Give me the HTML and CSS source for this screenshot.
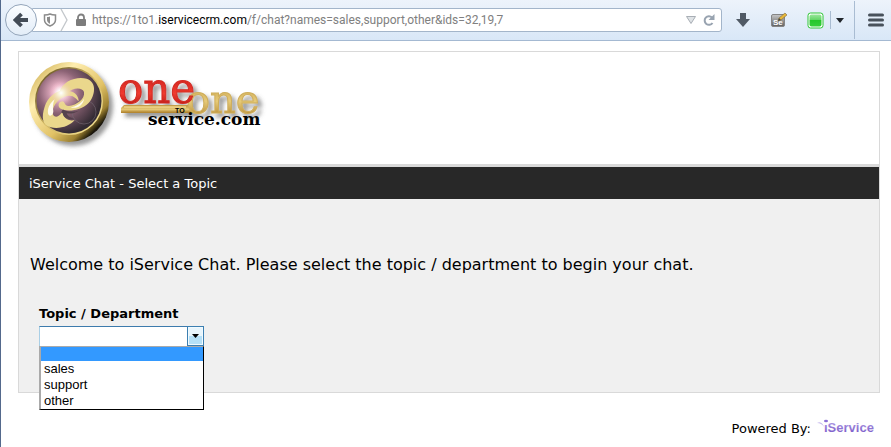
FILE: index.html
```html
<!DOCTYPE html>
<html lang="en">
<head>
<meta charset="utf-8">
<title>iService Chat</title>
<link rel="stylesheet" href="styles.css">
</head>
<body>
<header class="toolbar">
  <button class="back" type="button" aria-label="Back">
    <svg width="16" height="16" viewBox="0 0 16 16"><path d="M8.500 2 2.500 8l6 6M3.500 8H15" fill="none" stroke="#434c57" stroke-width="3.800"/></svg>
  </button>
  <div class="address">
    <svg class="shield" width="14" height="14" viewBox="0 0 14 14"><path d="M7 1C5 2 3 2 1.500 2v5c0 3 3 5 5.500 6 2.500-1 5.500-3 5.500-6V2C11 2 9 2 7 1z" fill="#fff" stroke="#8b8b8b" stroke-width="1.500"/><path d="M7 3.500C6 4 5 4 4 4v3c0 2 1.500 3 3 3.800z" fill="#8b8b8b"/></svg>
    <svg class="chevron" width="9" height="22" viewBox="0 0 9 22"><path d="M1 0l6 11-6 11" fill="none" stroke="#c3c7cb" stroke-width="1.300"/></svg>
    <svg class="lock" width="12" height="14" viewBox="0 0 12 14"><path d="M3 7V4.500a3 3 0 0 1 6 0V7" fill="none" stroke="#808080" stroke-width="1.800"/><rect x="1" y="6" width="10" height="7" rx="1" fill="#7c7c7c"/></svg>
    <span class="url">https://1to1.<b>iservicecrm.com</b>/f/chat?names=sales,support,other&amp;ids=32,19,7</span>
    <button class="tool" type="button" aria-label="History"><svg width="12" height="10" viewBox="0 0 12 10"><path d="M1.500 1.500h9L6 8.500z" fill="#dfe3e6" stroke="#a8aeb5"/></svg></button>
    <button class="tool" type="button" aria-label="Reload"><svg width="14" height="14" viewBox="0 0 14 14"><path d="M10 4.500A4.300 4.300 0 1 0 10.500 10" fill="none" stroke="#98a3b0" stroke-width="2"/><path d="M12.500 1v6h-6z" fill="#98a3b0"/></svg></button>
  </div>
  <div class="tools">
    <button class="tool" type="button" aria-label="Downloads"><svg width="16" height="16" viewBox="0 0 16 16"><path d="M5 1h6v6h4l-7 8-7-8h4z" fill="#505a65"/></svg></button>
    <button class="tool" type="button" aria-label="Selenium"><svg width="18" height="18" viewBox="0 0 18 18"><defs><linearGradient id="se" x2="0" y2="1"><stop stop-color="#c8c8c8"/><stop offset="1" stop-color="#5f5f5f"/></linearGradient></defs><rect x="1.500" y="3.500" width="13" height="12" rx="1.500" fill="url(#se)" stroke="#858585"/><text x="3" y="14" class="se">Se</text><path d="M8 10l1-3 6-5 2 2-6 5z" fill="#e7b739" stroke="#806c43" stroke-width=".6"/><path d="M8 10l1-3 2 2z" fill="#444"/></svg></button>
    <button class="tool" type="button" aria-label="Status"><svg width="17" height="17" viewBox="0 0 17 17"><defs><linearGradient id="green" x2="0" y2="1"><stop stop-color="#99e69b"/><stop offset=".5" stop-color="#5cd360"/><stop offset=".5" stop-color="#25c72b"/><stop offset="1" stop-color="#35cf3b"/></linearGradient></defs><rect x="1" y="1" width="15" height="15" rx="2.500" fill="#fff" stroke="#2dc634"/><rect x="2.500" y="2.500" width="12" height="12" rx="2" fill="url(#green)"/></svg></button>
    <span class="divider"></span>
    <button class="tool" type="button" aria-label="More"><svg width="8" height="5" viewBox="0 0 8 5"><path d="M0 0h8L4 5z" fill="#20252b"/></svg></button>
    <span class="divider tall"></span>
    <button class="tool" type="button" aria-label="Menu"><svg width="16" height="14" viewBox="0 0 16 14"><path d="M1.500 2h13M1.500 7h13M1.500 12h13" stroke="#48515b" stroke-width="3" stroke-linecap="round"/></svg></button>
  </div>
</header>
<main class="page">
  <section class="panel">
    <div class="brand">
      <svg width="250" height="96" viewBox="0 0 250 96" role="img" aria-label="One to One service.com">
        <defs>
          <linearGradient id="rim" x1="0" y1="0" x2="1" y2="1"><stop offset=".12" stop-color="#d9bd68"/><stop offset=".3" stop-color="#ffeeb0"/><stop offset=".6" stop-color="#e1c266"/><stop offset=".76" stop-color="#9d8131"/><stop offset=".84" stop-color="#191408"/><stop offset="1" stop-color="#60502a"/></linearGradient>
          <linearGradient id="inner" x1="0" y1="0" x2="1" y2="1"><stop stop-color="#54421a"/><stop offset=".5" stop-color="#ceb45f"/><stop offset="1" stop-color="#ffeda0"/></linearGradient>
          <radialGradient id="disc" cx=".36" cy=".36" r=".65"><stop stop-color="#fff"/><stop offset=".15" stop-color="#edb6c9"/><stop offset=".5" stop-color="#8c6375"/><stop offset="1" stop-color="#332b33"/></radialGradient>
          <linearGradient id="red" x2="0" y2="1"><stop offset=".3" stop-color="#d42620"/><stop offset=".6" stop-color="#f03b30"/><stop offset=".85" stop-color="#b91a17"/></linearGradient>
          <linearGradient id="gold" x2="0" y2="1"><stop offset=".1" stop-color="#c39d49"/><stop offset=".55" stop-color="#e6ca78"/><stop offset=".9" stop-color="#b48732"/></linearGradient>
          <radialGradient id="glow"><stop stop-color="#fff"/><stop offset=".3" stop-color="#fff" stop-opacity=".6"/><stop offset="1" stop-color="#f6b6cc" stop-opacity="0"/></radialGradient>
          <filter id="shadow" x="-20%" y="-20%" width="150%" height="150%"><feDropShadow dx="4" dy="4" stdDeviation="2" flood-color="#555" flood-opacity=".6"/></filter>
        </defs>
        <g filter="url(#shadow)"><circle cx="40" cy="40" r="40" fill="url(#rim)"/></g>
        <circle cx="40" cy="39" r="34" fill="url(#inner)"/>
        <circle cx="40" cy="39" r="32.500" fill="url(#disc)"/>
        <circle cx="55" cy="50" r="12" fill="none" stroke="#756a73" stroke-width=".6"/>
        <g transform="translate(-9 -2) scale(.3333)" fill="#ead78c">
          <path d="M138 92C110 88 84 110 74 140c-10 30-8 56 18 62 28 6 58-4 72-22-14 4-30-2-34-18-2-8-4-6-6-2-12 16-28 12-26-6 2-20 20-42 44-46 18-4 26 8 34 16 0-20-16-32-38-32z"/>
          <path d="M118 97c10-35 52-49 82-41 32 10 26 52 5 74-23 22-65 28-85 15-8-7-4-21 8-21 8 2 4 14 18 14 24-2 50-22 46-42-4-16-37-14-50 4-8-6-18-6-24-3z"/>
          <path d="M124 158c2-8 4-10 8-8 14 6 30 6 44 2-12 8-24 10-36 8 2 8 10 14 22 16-18 4-32-2-34-16z" fill="#55424d"/>
          <path d="M84 160c-2-18 8-32 20-42-6 14-6 24-4 36 0 14-14 18-16 6zM152 142c14-2 30-10 40-26-2 20-22 32-40 26z" fill="#fffbed"/>
        </g>
        <circle cx="32" cy="31" r="12" fill="url(#glow)"/>
        <g filter="url(#shadow)">
          <path d="M95 43h64l6 8H92v-5z" fill="url(#gold)"/>
          <text x="157" y="51" class="one gold">one</text>
          <text x="89" y="41" class="one red">one</text>
        </g>
        <path d="M95 45h62" stroke="#ffe9a0"/>
        <text x="146" y="51" class="to">TO</text>
        <text x="119" y="63" class="service">service.com</text>
      </svg>
    </div>
    <h1 class="title">iService Chat - Select a Topic</h1>
    <form class="chat">
      <p class="welcome">Welcome to iService Chat. Please select the topic / department to begin your chat.</p>
      <div class="field">
        <label for="topic">Topic / Department</label>
        <div class="combo">
          <select id="topic"><option></option><option>sales</option><option>support</option><option>other</option></select>
          <span class="arrow"><svg width="7" height="4" viewBox="0 0 7 4"><path d="M0 0h7L3.500 4z"/></svg></span>
          <ul class="menu" role="listbox" aria-label="Topic / Department">
            <li class="active" role="option" aria-selected="true"></li><li role="option">sales</li><li role="option">support</li><li role="option">other</li>
          </ul>
        </div>
      </div>
    </form>
  </section>
  <footer class="footer">Powered By:
    <svg width="60" height="20" viewBox="0 0 60 20" role="img" aria-label="iService"><defs><linearGradient id="violet" x2="0" y2="1"><stop stop-color="#b5a2e6"/><stop offset="1" stop-color="#7351c5"/></linearGradient></defs><path d="M1 5c4-2 6 1 7 4-2-3-4-4-7-4z" fill="#c6b9ec"/><ellipse cx="10" cy="3" rx="2" ry="1.300" fill="#8b6ed5"/><text x="8" y="14" class="powered">ıService</text></svg>
  </footer>
</main>
</body>
</html>
```
FILE: styles.css
```css
* { box-sizing: border-box; }
body {
  margin: 0;
  min-height: 100vh;
  border-left: 1px solid #53698c;
  background: #fff;
  color: #000;
  font: 13px "DejaVu Sans", Verdana, sans-serif;
}
button { padding: 0; border: 0; background: none; }
svg { display: block; }
.toolbar {
  display: flex;
  align-items: center;
  height: 41px;
  padding: 0 7px 0 4px;
  border-bottom: 1px solid #a4b9d2;
  background: linear-gradient(#edf3fb, #d9e7f7);
}
.back {
  z-index: 1;
  display: grid;
  place-items: center;
  width: 32px;
  height: 32px;
  border: 1px solid #94a5ba;
  border-radius: 50%;
  background: linear-gradient(#fbfdff, #e3edf8);
}
.address {
  display: flex;
  flex: 1;
  align-items: center;
  height: 24px;
  margin-left: -5px;
  padding: 0 5px 0 10px;
  border: 1px solid #a3b5ca;
  border-radius: 0 3px 3px 0;
  background: #fff;
}
.chevron { margin: 0 6px 0 3px; }
.url {
  flex: 1;
  margin-left: 5px;
  color: #808080;
  font: 12px Roboto, "Open Sans", sans-serif;
  white-space: nowrap;
}
.url b { color: #000; font-weight: 400; }
.address .tool + .tool { margin-left: 5px; }
.tools {
  display: flex;
  align-items: center;
  margin-left: 13px;
}
.tools .tool + .tool { margin-left: 19px; }
.divider {
  width: 1px;
  height: 18px;
  margin: 0 5px 0 6px;
  background: #a9bcd2;
}
.tall { height: 38px; margin: 0 13px 0 10px; }
.se { fill: #fff; font: bold 8px "Liberation Sans", sans-serif; }
.page { padding: 10px 11px 10px 17px; }
.panel { border: 1px solid #d9d9d9; background: #f0f0f0; }
.brand {
  padding: 10px 10px 6px;
  border-bottom: 3px solid #d9d9d9;
  background: #fff;
}
.one { font: 42px "DejaVu Serif", serif; stroke-width: 1; }
.red { fill: url(#red); stroke: #d32b24; }
.gold { fill: url(#gold); stroke: #cfae5c; font-size: 40px; }
.to { font: bold 7px "Liberation Sans", sans-serif; }
.service { font: bold 17px "DejaVu Serif", serif; }
.title {
  margin: 0;
  padding: 1px 10px 0;
  background: #282828;
  color: #fff;
  font-size: 13px;
  font-weight: 400;
  line-height: 31px;
}
.chat { padding: 55px 11px 45px; }
.welcome { margin: 0; font-size: 16px; line-height: 22px; }
.field { margin: 28px 9px 0; }
.field label {
  display: block;
  font-weight: 700;
  line-height: 20px;
}
.combo { position: relative; width: 165px; margin-top: 2px; }
.combo select {
  display: block;
  width: 100%;
  height: 21px;
  border: 1px solid #a9cfe6;
  border-top-color: #3d7bad;
  border-radius: 0;
  background: #fff;
  appearance: none;
}
.arrow {
  position: absolute;
  top: 0;
  right: 0;
  display: grid;
  place-items: center;
  width: 17px;
  height: 20px;
  border: 1px solid #3c7fb1;
  background: linear-gradient(#e8f5fc 50%, #b5e0f7 50%);
  box-shadow: inset 0 0 0 1px #f0faff;
  pointer-events: none;
}
.menu {
  position: absolute;
  top: 20px;
  left: 0;
  width: 100%;
  margin: 0;
  padding: 0;
  border: 1px solid #000;
  border-top-color: #aaa;
  border-left: 2px solid #aaa;
  background: #fff;
  font: 13px "Liberation Sans", Arial, sans-serif;
  list-style: none;
}
.menu li { padding-left: 3px; line-height: 16px; }
.menu .active { height: 14px; background: #39f; }
.footer {
  display: flex;
  align-items: center;
  justify-content: flex-end;
  gap: 5px;
  margin-top: 25px;
  padding-right: 4px;
  font-size: 13px;
}
.powered { fill: url(#violet); font: bold 13px "Liberation Sans", sans-serif; }
```
